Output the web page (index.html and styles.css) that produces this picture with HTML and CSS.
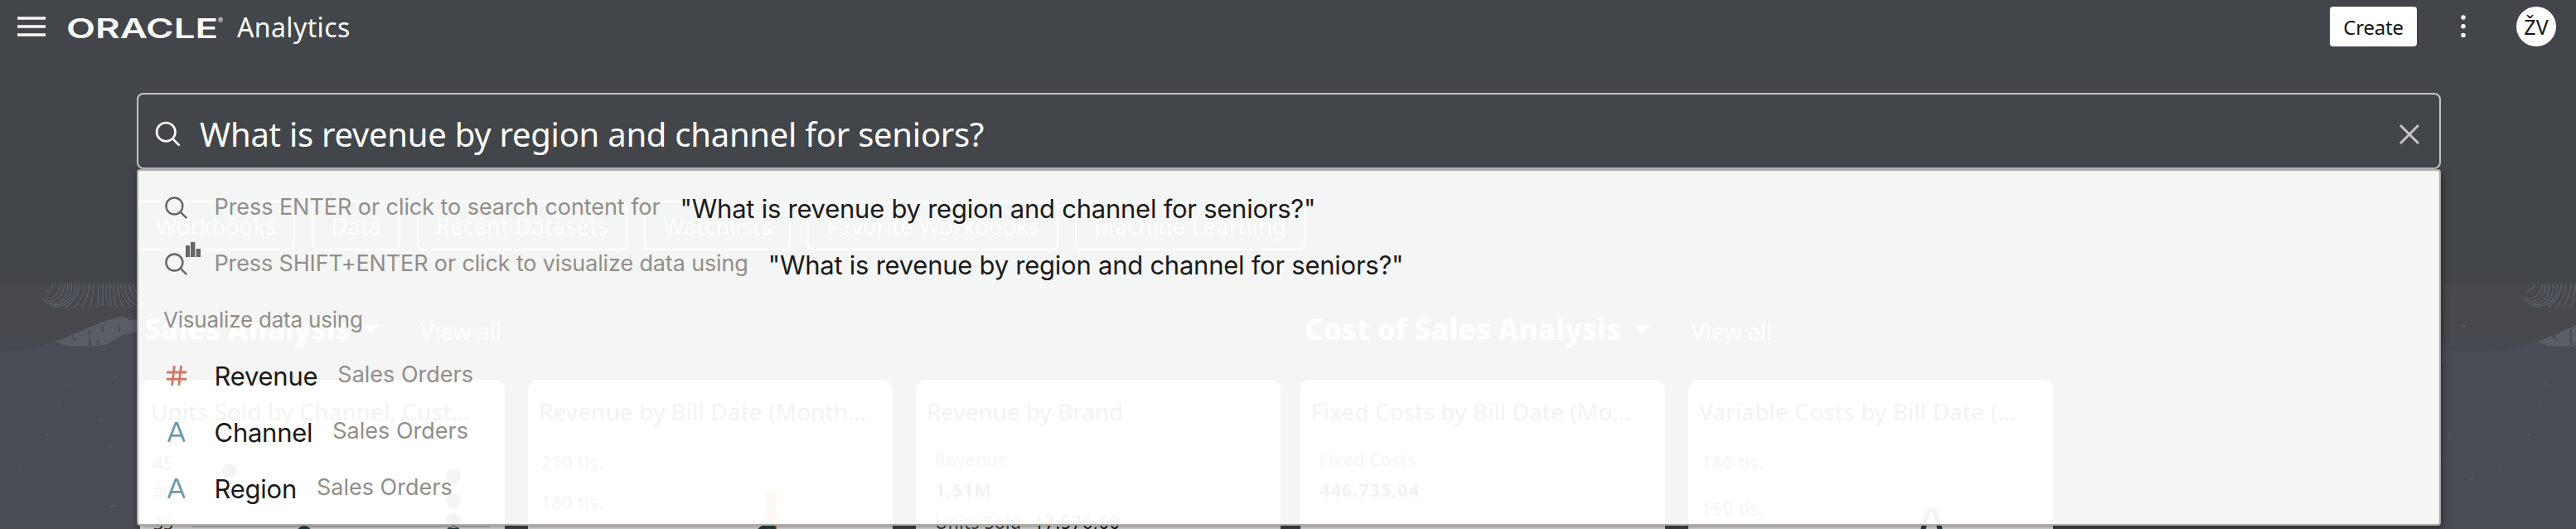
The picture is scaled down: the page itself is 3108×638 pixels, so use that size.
FILE: index.html
```
<!DOCTYPE html>
<html lang="en">
<head>
<meta charset="utf-8">
<title>Oracle Analytics</title>
<link rel="stylesheet" href="styles.css">
</head>
<body>
<svg class="scene" width="3108" height="296" viewBox="0 0 3108 296" aria-hidden="true">
  <defs>
    <linearGradient id="sky" x1="0" y1="0" x2="0" y2="1">
      <stop offset="0" stop-color="#48494c"/><stop offset=".3" stop-color="#454850"/>
    </linearGradient>
    <g id="tile">
      <path d="M-60 78C-30 84 0 84 20 81S55 73 67 70C95 60 115 47 145 40L154 40L172 46L1500 60L2934 78V296H-60Z" fill="#494c55"/>
      <path d="M67 70C95 60 115 47 145 40L153 41L155 44L166 43V58L148 62L128 74L100 76L80 75Z" fill="#5a5d66"/>
      <path d="M86 63l5 6M88 62l1 4M108 55v19M107 66l3 8M123 50l1 8M144 50v8M118 68v6" stroke="#4a4d56" stroke-width="2" fill="none"/>
      <g fill="none" stroke="#5a626d" stroke-width="1.2">
        <path d="M54 9C60 9 64 5 64 0M50 18C64 21 74 10 73 0M52 21C69 24 79 12 77 0M56 24C74 27 84 14 81 0M60 26C80 28 88 14 86 0M64 28C84 29 93 14 91 0M80 29C90 20 96 12 96 0M90 29C98 20 102 10 102 0M99 28C105 18 108 10 108 0M108 28C111 20 114 10 113 0M118 28C119 18 119 10 119 0M124 27C124 18 124 8 124 0M130 27C128 18 128 8 129 0M135 28C132 18 132 8 133 0M141 28C137 18 137 8 138 0M149 28C143 18 142 8 142 0M158 28C149 20 146 10 146 0M166 27C154 20 150 10 151 0M166 20C159 14 156 8 156 0M166 12C162 8 161 4 161 0"/>
      </g>
      <g fill="#555861">
        <path d="M76 119l4 3v1l-4-3zM138 111h3v3h-3zM69 145h4v1h-4zM133 197h3v1h-3zM22 222h3v1h-3zM56 180h2v3h-2zM121 164h2v2h-2zM133 268h5v1h-5zM-24 50h4v2h-4zM-48 90h2v4h-2zM-40 180h3v2h-3zM-14 235h5v1h-5zM-48 208h2v2h-2z"/>
      </g>
    </g>
  </defs>
  <rect width="3108" height="296" fill="url(#sky)"/>
  <use href="#tile"/>
  <use href="#tile" x="2994"/>
</svg>

<header class="topbar">
  <svg class="menu-icon" width="34" height="24" viewBox="0 0 34 24"><path d="M0 2h34M0 12h34M0 22h34" stroke="#fcfbfa" stroke-width="3.6"/></svg>
  <svg class="logo" width="187" height="28" viewBox="0 0 187 28">
    <text class="logo-word" x="-2" y="26" textLength="183" lengthAdjust="spacingAndGlyphs">ORACLE</text>
    <text class="logo-reg" x="181" y="8">®</text>
  </svg>
  <span class="product">Analytics</span>
  <span class="create">Create</span>
  <svg class="dots" width="6" height="28" viewBox="0 0 6 28" fill="#fff"><circle cx="3" cy="3" r="2.7"/><circle cx="3" cy="13.7" r="2.7"/><circle cx="3" cy="24.4" r="2.7"/></svg>
  <span class="avatar">ŽV</span>
</header>

<main class="home">
  <div class="search">
    <div class="search-box">
      <svg class="lens" width="32" height="32" viewBox="0 0 32 32" fill="none" stroke="#fff" stroke-width="2.6"><circle cx="13.3" cy="13.2" r="11.2"/><path d="M21 21l8.5 8.5"/></svg>
      <span class="search-text">What is revenue by region and channel for seniors?</span>
      <svg class="clear" width="24" height="24" viewBox="0 0 24 24" stroke="#c5c6c9" stroke-width="3"><path d="M1 1l22 22M23 1L1 23"/></svg>
    </div>
    <div class="popup">
      <div class="row">
        <span class="row-icon"><svg width="28" height="28" viewBox="0 0 28 28" fill="none" stroke="#676665" stroke-width="2.4"><circle cx="11.4" cy="11.5" r="10"/><path d="M18.4 18.4l7.8 7.8"/></svg></span>
        <span class="hint tight">Press ENTER or click to search content for</span>
        <span class="term">"What is revenue by region and channel for seniors?"</span>
      </div>
      <div class="row">
        <span class="row-icon"><svg width="28" height="28" viewBox="0 0 28 28" fill="none" stroke="#676665" stroke-width="2.4"><circle cx="11.4" cy="11.5" r="10"/><path d="M18.4 18.4l7.8 7.8"/></svg>
          <svg class="bars" width="18" height="18" viewBox="0 0 18 18" fill="#676665"><path d="M0 4h5v14H0zM6 0h5.4v18H6zM12.6 8H18v10h-5.4z"/></svg></span>
        <span class="hint tighter">Press SHIFT+ENTER or click to visualize data using</span>
        <span class="term">"What is revenue by region and channel for seniors?"</span>
      </div>
      <div class="group">Visualize data using</div>
      <div class="row">
        <span class="row-icon"><svg width="24" height="24" viewBox="0 0 24 24" stroke="#cc7a66" stroke-width="2.9" fill="none"><path d="M0 8h24M0 16.2h24M9.4 0L6.6 24M17.6 0l-2.8 24"/></svg></span>
        <span class="term">Revenue</span><span class="hint">Sales Orders</span>
      </div>
      <div class="row">
        <span class="row-icon"><svg width="22" height="24" viewBox="0 0 22 24" stroke="#6d99b2" stroke-width="2.8" fill="none"><path d="M1.4 23.8L10 1.2h1.6L20.4 23.8M4.4 16.4h13"/></svg></span>
        <span class="term narrow">Channel</span><span class="hint">Sales Orders</span>
      </div>
      <div class="row">
        <span class="row-icon"><svg width="22" height="24" viewBox="0 0 22 24" stroke="#6d99b2" stroke-width="2.8" fill="none"><path d="M1.4 23.8L10 1.2h1.6L20.4 23.8M4.4 16.4h13"/></svg></span>
        <span class="term">Region</span><span class="hint">Sales Orders</span>
      </div>
    </div>
  </div>

  <nav class="chips">
    <span class="chip">Workbooks</span><span class="chip">Data</span><span class="chip">Recent Datasets</span><span class="chip">Watchlists</span><span class="chip">Favorite Workbooks</span><span class="chip">Machine Learning</span>
  </nav>

  <div class="sections">
    <section class="section">
      <div class="section-head"><h2 class="section-title">Sales Analysis</h2><span class="caret"></span><a class="view-all">View all</a></div>
      <div class="cards">
        <article class="card">
          <h3 class="card-title">Units Sold by Channel, Cust…</h3>
          <svg class="chart" width="440" height="140" viewBox="0 0 440 140">
            <path class="grid" d="M63 44h360M63 81h360M63 119h360"/>
            <text x="16" y="50">45</text><text x="16" y="86">40</text><text x="16" y="123">35</text>
            <g class="teal"><circle cx="108" cy="52" r="9"/><circle cx="378" cy="58" r="9"/><circle cx="378" cy="88" r="9"/><circle cx="378" cy="112" r="9"/><circle cx="378" cy="127" r="9"/><circle cx="198" cy="127" r="9"/></g>
            <path d="M370 117q8 6 16 0" stroke="#dfe3e3" stroke-width="2" fill="none"/>
          </svg>
        </article>
        <article class="card">
          <h3 class="card-title">Revenue by Bill Date (Month…</h3>
          <svg class="chart" width="440" height="140" viewBox="0 0 440 140">
            <path class="grid" d="M113 44h290M113 92h290"/>
            <text x="16" y="50" textLength="75">210 tis.</text><text x="16" y="98" textLength="75">180 tis.</text>
            <rect x="287.5" y="76" width="12.5" height="64" fill="#e08a2f"/>
            <path d="M276 128Q286 118 291 118T297 128" stroke="#2a4a4e" stroke-width="7" fill="none"/>
          </svg>
        </article>
        <article class="card">
          <h3 class="card-title snug">Revenue by Brand</h3>
          <div class="kpi"><span class="kpi-label">Revenue</span><b class="kpi-value">1,51M</b><span class="kpi-line"><span class="kpi-label">Units Sold</span><span class="kpi-num">17.576,00</span></span></div>
        </article>
      </div>
    </section>
    <section class="section">
      <div class="section-head"><h2 class="section-title">Cost of Sales Analysis</h2><span class="caret"></span><a class="view-all">View all</a></div>
      <div class="cards">
        <article class="card">
          <h3 class="card-title">Fixed Costs by Bill Date (Mo…</h3>
          <div class="kpi"><span class="kpi-label">Fixed Costs</span><b class="kpi-value">446.735,04</b></div>
        </article>
        <article class="card">
          <h3 class="card-title wide">Variable Costs by Bill Date (…</h3>
          <svg class="chart" width="440" height="140" viewBox="0 0 440 140">
            <path class="grid" d="M115 44h288M115 100h288"/>
            <text x="16" y="50" textLength="75">180 tis.</text><text x="16" y="106" textLength="75">150 tis.</text>
            <path d="M280 136C287 108 289 98 293.500 98S300 108 307 136" stroke="#2a4a4e" stroke-width="6" fill="none"/>
          </svg>
        </article>
      </div>
    </section>
  </div>
</main>
</body>
</html>
```
FILE: styles.css
```
* { box-sizing: border-box; }
body {
  margin: 0;
  width: 3108px;
  height: 638px;
  overflow: hidden;
  position: relative;
  background: #424549;
  font-family: "Noto Sans", sans-serif;
  white-space: nowrap;
}
.scene { position: absolute; left: 0; top: 342px; z-index: -1; }

.topbar { display: flex; align-items: center; height: 64px; padding: 0 24px 0 21px; }
.logo { margin: 3px 0 0 27px; overflow: visible; }
.logo-word { font: 600 33px Inter, sans-serif; fill: #fcfbfa; }
.logo-reg { font: 9px Inter, sans-serif; fill: #fcfbfa; }
.product { margin-left: 17px; padding-top: 1px; font-size: 32px; letter-spacing: .38px; line-height: 48px; color: #fcfbfa; }
.create {
  display: flex; align-items: center; justify-content: center;
  margin-left: auto; width: 105px; height: 48px; border-radius: 4px;
  background: #fff; color: #161513; font-size: 24px; letter-spacing: -.2px;
}
.dots { margin-left: 53px; margin-right: 61px; }
.avatar {
  display: flex; align-items: center; justify-content: center;
  width: 48px; height: 48px; border-radius: 50%;
  background: #fff; color: #161513; font-size: 25px;
}

.home { padding-top: 48px; }
.search { position: relative; width: 2780px; margin-left: 165px; }
.search-box {
  display: flex; align-items: center;
  height: 92px; padding: 7px 24px 0 20px;
  border: 2px solid #c4c5c9; border-radius: 8px; color: #fff;
}
.search-text { margin-left: 22px; font-size: 40px; letter-spacing: -.26px; line-height: 56px; }
.clear { margin-left: auto; }

.popup {
  position: absolute; z-index: 2; top: 92px; left: 0;
  width: 2780px; height: 430px; padding-top: 12px;
  border: 2px solid #b0aba6; border-radius: 4px;
  background: rgba(255, 255, 255, .945);
  box-shadow: 1px 3px 8px rgba(0, 0, 0, .5);
  font-family: Inter, sans-serif;
}
.row { display: flex; align-items: center; height: 68px; padding-left: 30px; }
.row-icon { position: relative; display: flex; align-items: center; justify-content: center; width: 32px; height: 32px; margin: 0 29.5px 3px 0; }
.bars { position: absolute; left: 27px; top: -11px; }
.term { margin-right: 24px; font-size: 31px; letter-spacing: -.25px; line-height: 44px; color: #1b1a19; }
.hint { margin-right: 24px; padding-bottom: 4px; font-size: 27px; line-height: 40px; color: #938d88; }
.tight { letter-spacing: -.06px; }
.tighter { letter-spacing: -.14px; }
.narrow { letter-spacing: -.26px; }
.group { height: 66px; padding: 0 0 3px 30px; font-size: 26px; letter-spacing: -.2px; line-height: 64px; color: #938d88; }

.chips { display: flex; gap: 20px; margin: 38px 0 0 165px; }
.chip {
  display: flex; align-items: center;
  height: 60px; padding: 0 21px;
  border: 2px solid #d8d9db; border-radius: 8px;
  color: #d8d9db; font-size: 27px; letter-spacing: .25px;
}

.sections { display: flex; gap: 24px; margin: 70px 0 0 169px; }
.section-head { display: flex; align-items: center; height: 50px; padding-left: 5px; }
.section-title { margin: 0; font-size: 35px; font-weight: 800; letter-spacing: .1px; line-height: 50px; color: #fff; }
.caret { margin-left: 16px; border: 9px solid transparent; border-top: 11px solid #fff; border-bottom: 0; }
.view-all { margin-left: 51px; padding-top: 3px; font-size: 28px; letter-spacing: -.14px; line-height: 40px; color: #cfe6e2; }
.cards { display: flex; gap: 28px; margin-top: 36px; }
.card { width: 440px; height: 198px; padding-top: 18px; border-radius: 12px 12px 0 0; background: #fff; }
.card-title { margin: 0; padding-left: 13px; font-size: 28px; font-weight: 400; letter-spacing: .1px; line-height: 40px; color: #201e1c; }
.snug { letter-spacing: -.05px; }
.wide { letter-spacing: .15px; }
.chart { display: block; font-size: 21px; fill: #3d3b39; }
.grid { stroke: #d4d4d4; stroke-width: 1.5; }
.teal { fill: #2a4a4e; }
.kpi { display: flex; flex-direction: column; padding: 20px 0 0 23px; line-height: 36px; }
.kpi-label { font-size: 21px; letter-spacing: .5px; color: #4a4846; }
.kpi-value { font-size: 22px; letter-spacing: .8px; color: #201e1c; }
.kpi-line { display: flex; gap: 15px; padding-top: 4px; }
.kpi-num { font-size: 21px; letter-spacing: 1px; color: #161513; }
```
